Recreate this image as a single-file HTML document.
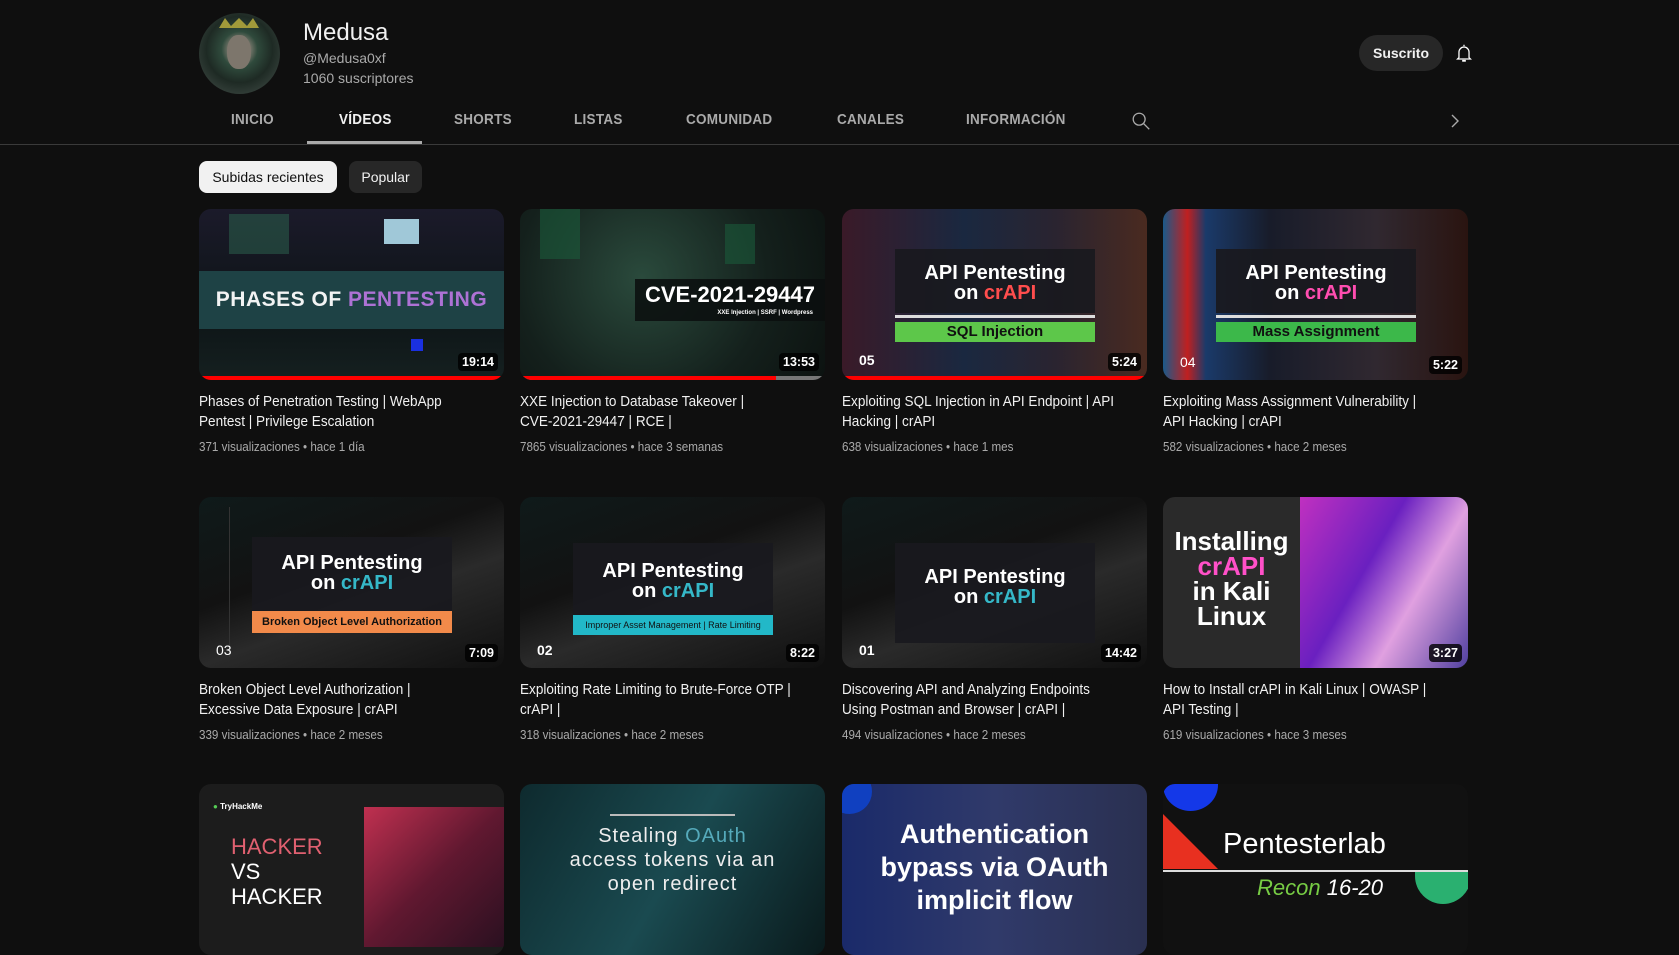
<!DOCTYPE html>
<html><head><meta charset="utf-8"><style>
*{margin:0;padding:0;box-sizing:border-box}
body{width:1679px;height:904px;background:#0f0f0f;overflow:hidden;font-family:"Liberation Sans",Arial,sans-serif;position:relative;color:#f1f1f1}
.abs{position:absolute}
.avatar{left:199px;top:13px;width:81px;height:81px;border-radius:50%;background:radial-gradient(circle at 50% 45%,#8a8378 0 14%,#2f4a3c 30%,#1e2a24 55%,#4a5550 100%);overflow:hidden}
.name{left:303px;top:19px;font-size:24px;color:#f1f1f1}
.handle{left:303px;top:50px;font-size:14px;color:#aaa}
.subs{left:303px;top:70px;font-size:14px;color:#aaa}
.sub{left:1359px;top:35px;width:84px;height:36px;border-radius:18px;background:#272727;font-size:14px;font-weight:bold;color:#f1f1f1;text-align:center;line-height:36px}
.tab{top:112px;font-size:14.5px;font-weight:bold;color:#aaa;letter-spacing:.3px;transform:scaleX(.93);transform-origin:left}
.tab.on{color:#f1f1f1}
.ul{left:307px;top:141px;width:115px;height:3px;background:#aaa}
.div{left:0;top:144px;width:1679px;height:1px;background:#3a3a3a}
.chip{top:161px;height:32px;border-radius:8px;font-size:14px;line-height:32px;text-align:center}
.card{width:305px;height:171px;border-radius:12px;overflow:hidden;position:absolute}
.dur{position:absolute;right:6px;bottom:6px;background:rgba(0,0,0,.8);color:#fff;font-size:12.5px;font-weight:bold;padding:2px 4px;border-radius:4px}
.prog{position:absolute;left:0;bottom:0;height:4px;background:#f00}
.progbg{position:absolute;left:0;bottom:0;height:4px;width:100%;background:#777}
.t{position:absolute;width:340px;font-size:14.5px;line-height:20px;color:#f1f1f1;transform:scaleX(.935);transform-origin:left}
.m{position:absolute;font-size:12.5px;color:#aaa;transform:scaleX(.93);transform-origin:left}
.panel{position:absolute;left:53px;width:200px;height:80px;background:rgba(25,25,30,.92);text-align:center;color:#fff;font-size:20px;font-weight:bold;line-height:20px;padding-top:16px}
.num{position:absolute;left:17px;bottom:10px;color:#fff;font-size:14px;font-weight:bold}
</style></head><body>
<div class="abs avatar"><div style="position:absolute;left:28px;top:22px;width:24px;height:34px;border-radius:45%;background:#7d766c"></div><div style="position:absolute;left:20px;top:5px;width:40px;height:10px;background:#a19a3a;clip-path:polygon(0 100%,15% 0,30% 80%,50% 0,70% 80%,85% 0,100% 100%)"></div></div>
<div class="abs name">Medusa</div>
<div class="abs handle">@Medusa0xf</div>
<div class="abs subs">1060 suscriptores</div>
<div class="abs sub">Suscrito</div>
<svg class="abs" style="left:1453px;top:42px" width="22" height="22" viewBox="0 0 24 24" fill="none" stroke="#fff" stroke-width="1.4"><path d="M12 3v1.5M6.5 17V11a5.5 5.5 0 0 1 11 0v6l1.5 1.5H5z"/><path d="M10 20.5h4" stroke-width="2"/></svg>
<div class="abs tab" style="left:231px">INICIO</div>
<div class="abs tab on" style="left:339px">VÍDEOS</div>
<div class="abs tab" style="left:454px">SHORTS</div>
<div class="abs tab" style="left:574px">LISTAS</div>
<div class="abs tab" style="left:686px">COMUNIDAD</div>
<div class="abs tab" style="left:837px">CANALES</div>
<div class="abs tab" style="left:966px">INFORMACIÓN</div>
<svg class="abs" style="left:1130px;top:110px" width="22" height="22" viewBox="0 0 24 24" fill="none" stroke="#aaa" stroke-width="1.4"><circle cx="10" cy="10" r="6.5"/><path d="M15 15l6 6"/></svg>
<svg class="abs" style="left:1447px;top:112px" width="16" height="18" viewBox="0 0 16 18" fill="none" stroke="#aaa" stroke-width="1.4"><path d="M5 3l6 6-6 6"/></svg>
<div class="abs ul"></div><div class="abs div"></div>
<div class="abs chip" style="left:199px;width:138px;background:#f1f1f1;color:#0f0f0f">Subidas recientes</div>
<div class="abs chip" style="left:349px;width:73px;background:#272727;color:#f1f1f1">Popular</div>

<!-- row 1 -->
<div class="card" style="left:199px;top:209px;background:linear-gradient(180deg,#1b1a2a,#0d1416 60%,#152020)">
<div style="position:absolute;left:30px;top:5px;width:60px;height:40px;background:#2a5a4a;opacity:.6"></div>
<div style="position:absolute;left:185px;top:10px;width:35px;height:25px;background:#a0c8d8"></div>
<div style="position:absolute;left:0;top:62px;width:305px;height:58px;background:#1f4548;opacity:.95;color:#fff;font-size:21px;font-weight:bold;text-align:center;line-height:58px;letter-spacing:.5px">PHASES OF <span style="color:#b678e0">PENTESTING</span></div>
<div style="position:absolute;left:212px;top:130px;width:12px;height:12px;background:#1a30e0"></div>
<div class="prog" style="width:100%"></div><div class="dur" style="bottom:9px">19:14</div></div>
<div class="card" style="left:520px;top:209px;background:radial-gradient(circle at 40% 40%,#2a4a3c,#14201c 60%,#0c1210)">
<div style="position:absolute;left:20px;top:0;width:40px;height:50px;background:#1b5a3a;opacity:.6"></div>
<div style="position:absolute;left:205px;top:15px;width:30px;height:40px;background:#1b5a3a;opacity:.6"></div>
<div style="position:absolute;left:115px;top:70px;width:190px;height:42px;background:rgba(10,14,14,.85);color:#fff;font-size:22px;font-weight:bold;text-align:center;padding-top:3px">CVE-2021-29447<div style="font-size:6px;text-align:right;padding-right:12px;margin-top:2px">XXE Injection | SSRF | Wordpress</div></div>
<div class="progbg"></div><div class="prog" style="width:84%"></div><div class="dur" style="bottom:9px">13:53</div></div>
<div class="card" style="left:842px;top:209px;background:linear-gradient(90deg,#3a1a28,#1a2840 40%,#2a2430 70%,#4a2a20)">
<div class="panel" style="top:40px;height:64px;padding-top:14px">API Pentesting<br>on <span style="color:#ff4d4d">crAPI</span></div>
<div style="position:absolute;left:53px;top:106px;width:200px;height:3px;background:#ddd"></div>
<div style="position:absolute;left:53px;top:113px;width:200px;height:20px;background:#5dc74a;color:#111;font-size:15px;font-weight:bold;text-align:center;line-height:20px">SQL Injection</div>
<div class="num" style="bottom:12px">05</div>
<div class="prog" style="width:100%"></div><div class="dur" style="bottom:9px">5:24</div></div>
<div class="card" style="left:1163px;top:209px;background:linear-gradient(90deg,#1a5a8a,#c02020 8%,#1a3a6a 14%,#181c2a 35%,#302830 70%,#2a1410)">
<div class="panel" style="top:40px;height:64px;padding-top:14px">API Pentesting<br>on <span style="color:#ff4db0">crAPI</span></div>
<div style="position:absolute;left:53px;top:106px;width:200px;height:3px;background:#ddd"></div>
<div style="position:absolute;left:53px;top:113px;width:200px;height:20px;background:#3cb84a;color:#111;font-size:15px;font-weight:bold;text-align:center;line-height:20px">Mass Assignment</div>
<div class="num" style="font-weight:normal">04</div>
<div class="dur">5:22</div></div>

<div class="t" style="left:199px;top:392px">Phases of Penetration Testing | WebApp<br>Pentest | Privilege Escalation</div>
<div class="m" style="left:199px;top:440px">371 visualizaciones • hace 1 día</div>
<div class="t" style="left:520px;top:392px">XXE Injection to Database Takeover |<br>CVE-2021-29447 | RCE |</div>
<div class="m" style="left:520px;top:440px">7865 visualizaciones • hace 3 semanas</div>
<div class="t" style="left:842px;top:392px">Exploiting SQL Injection in API Endpoint | API<br>Hacking | crAPI</div>
<div class="m" style="left:842px;top:440px">638 visualizaciones • hace 1 mes</div>
<div class="t" style="left:1163px;top:392px">Exploiting Mass Assignment Vulnerability |<br>API Hacking | crAPI</div>
<div class="m" style="left:1163px;top:440px">582 visualizaciones • hace 2 meses</div>

<!-- row 2 -->
<div class="card" style="left:199px;top:497px;background:linear-gradient(160deg,#0f1a1a,#121212 40%,#2a2a2a 60%,#101010)">
<div style="position:absolute;left:30px;top:10px;width:200px;height:150px;border-left:1px solid #333"></div>
<div class="panel" style="top:40px;height:90px">API Pentesting<br>on <span style="color:#35b8c8">crAPI</span></div>
<div style="position:absolute;left:53px;top:114px;width:200px;height:22px;background:#f28a4a;color:#111;font-size:11px;font-weight:bold;text-align:center;line-height:22px">Broken Object Level Authorization</div>
<div class="num" style="font-weight:normal">03</div><div class="dur">7:09</div></div>
<div class="card" style="left:520px;top:497px;background:linear-gradient(160deg,#0f1a1a,#121212 40%,#2a2a2a 60%,#101010)">
<div class="panel" style="top:46px;height:90px;padding-top:18px">API Pentesting<br>on <span style="color:#35b8c8">crAPI</span></div>
<div style="position:absolute;left:53px;top:118px;width:200px;height:20px;background:#22b8c8;color:#111;font-size:9px;text-align:center;line-height:20px">Improper Asset Management | Rate Limiting</div>
<div class="num">02</div><div class="dur">8:22</div></div>
<div class="card" style="left:842px;top:497px;background:linear-gradient(160deg,#0f1a1a,#121212 40%,#2a2a2a 60%,#101010)">
<div class="panel" style="top:46px;height:100px;padding-top:24px">API Pentesting<br>on <span style="color:#35b8c8">crAPI</span></div>
<div class="num">01</div><div class="dur">14:42</div></div>
<div class="card" style="left:1163px;top:497px;background:#2a2a2a">
<div style="position:absolute;left:137px;top:0;width:168px;height:171px;background:linear-gradient(120deg,#c030c0,#6a20c0 40%,#e0a0e0 65%,#5040a0)"></div>
<div style="position:absolute;left:0;top:32px;width:137px;text-align:center;color:#fff;font-size:26px;font-weight:bold;line-height:25px">Installing<br><span style="color:#ff50c8">crAPI</span><br>in Kali<br>Linux</div>
<div class="dur">3:27</div></div>

<div class="t" style="left:199px;top:680px">Broken Object Level Authorization |<br>Excessive Data Exposure | crAPI</div>
<div class="m" style="left:199px;top:728px">339 visualizaciones • hace 2 meses</div>
<div class="t" style="left:520px;top:680px">Exploiting Rate Limiting to Brute-Force OTP |<br>crAPI |</div>
<div class="m" style="left:520px;top:728px">318 visualizaciones • hace 2 meses</div>
<div class="t" style="left:842px;top:680px">Discovering API and Analyzing Endpoints<br>Using Postman and Browser | crAPI |</div>
<div class="m" style="left:842px;top:728px">494 visualizaciones • hace 2 meses</div>
<div class="t" style="left:1163px;top:680px">How to Install crAPI in Kali Linux | OWASP |<br>API Testing |</div>
<div class="m" style="left:1163px;top:728px">619 visualizaciones • hace 3 meses</div>

<!-- row 3 -->
<div class="card" style="left:199px;top:784px;background:#1c1c1c">
<div style="position:absolute;left:14px;top:18px;color:#fff;font-size:8px;font-weight:bold"><span style="color:#5c5">●</span> TryHackMe</div>
<div style="position:absolute;left:165px;top:23px;width:140px;height:140px;background:linear-gradient(135deg,#c03050,#601830 50%,#2a1020)"></div>
<div style="position:absolute;left:32px;top:50px;color:#fff;font-size:22px;line-height:25px"><span style="color:#e06070">HACKER</span><br>VS<br>HACKER</div></div>
<div class="card" style="left:520px;top:784px;background:linear-gradient(120deg,#0e2a2e,#1a4a50 50%,#0a1a1c)">
<div style="position:absolute;left:90px;top:30px;width:125px;height:2px;background:#bbb"></div>
<div style="position:absolute;left:0;top:40px;width:305px;text-align:center;color:#eee;font-size:20px;line-height:24px;letter-spacing:1px">Stealing <span style="color:#5ab">OAuth</span><br>access tokens via an<br>open redirect</div></div>
<div class="card" style="left:842px;top:784px;background:linear-gradient(90deg,#1a2a6a,#303a6a 50%,#2a3050)">
<div style="position:absolute;left:-15px;top:-15px;width:45px;height:45px;border-radius:50%;background:#1040c0"></div>
<div style="position:absolute;left:0;top:34px;width:305px;text-align:center;color:#fff;font-size:27px;font-weight:bold;line-height:33px">Authentication<br>bypass via OAuth<br>implicit flow</div></div>
<div class="card" style="left:1163px;top:784px;background:#111">
<div style="position:absolute;left:0;top:-25px;width:55px;height:52px;border-radius:50%;background:#1438e8"></div>
<div style="position:absolute;left:0;top:30px;width:55px;height:55px;background:#e83020;clip-path:polygon(0 0,100% 100%,0 100%)"></div>
<div style="position:absolute;left:0;top:86px;width:305px;height:2px;background:#ddd"></div>
<div style="position:absolute;left:60px;top:44px;color:#fff;font-size:29px">Pentesterlab</div>
<div style="position:absolute;left:94px;top:91px;color:#7c4;font-size:22px;font-style:italic">Recon <span style="color:#fff">16-20</span></div>
<div style="position:absolute;left:252px;top:88px;width:56px;height:32px;border-radius:0 0 28px 28px;background:#2ab070"></div></div>
</body></html>
